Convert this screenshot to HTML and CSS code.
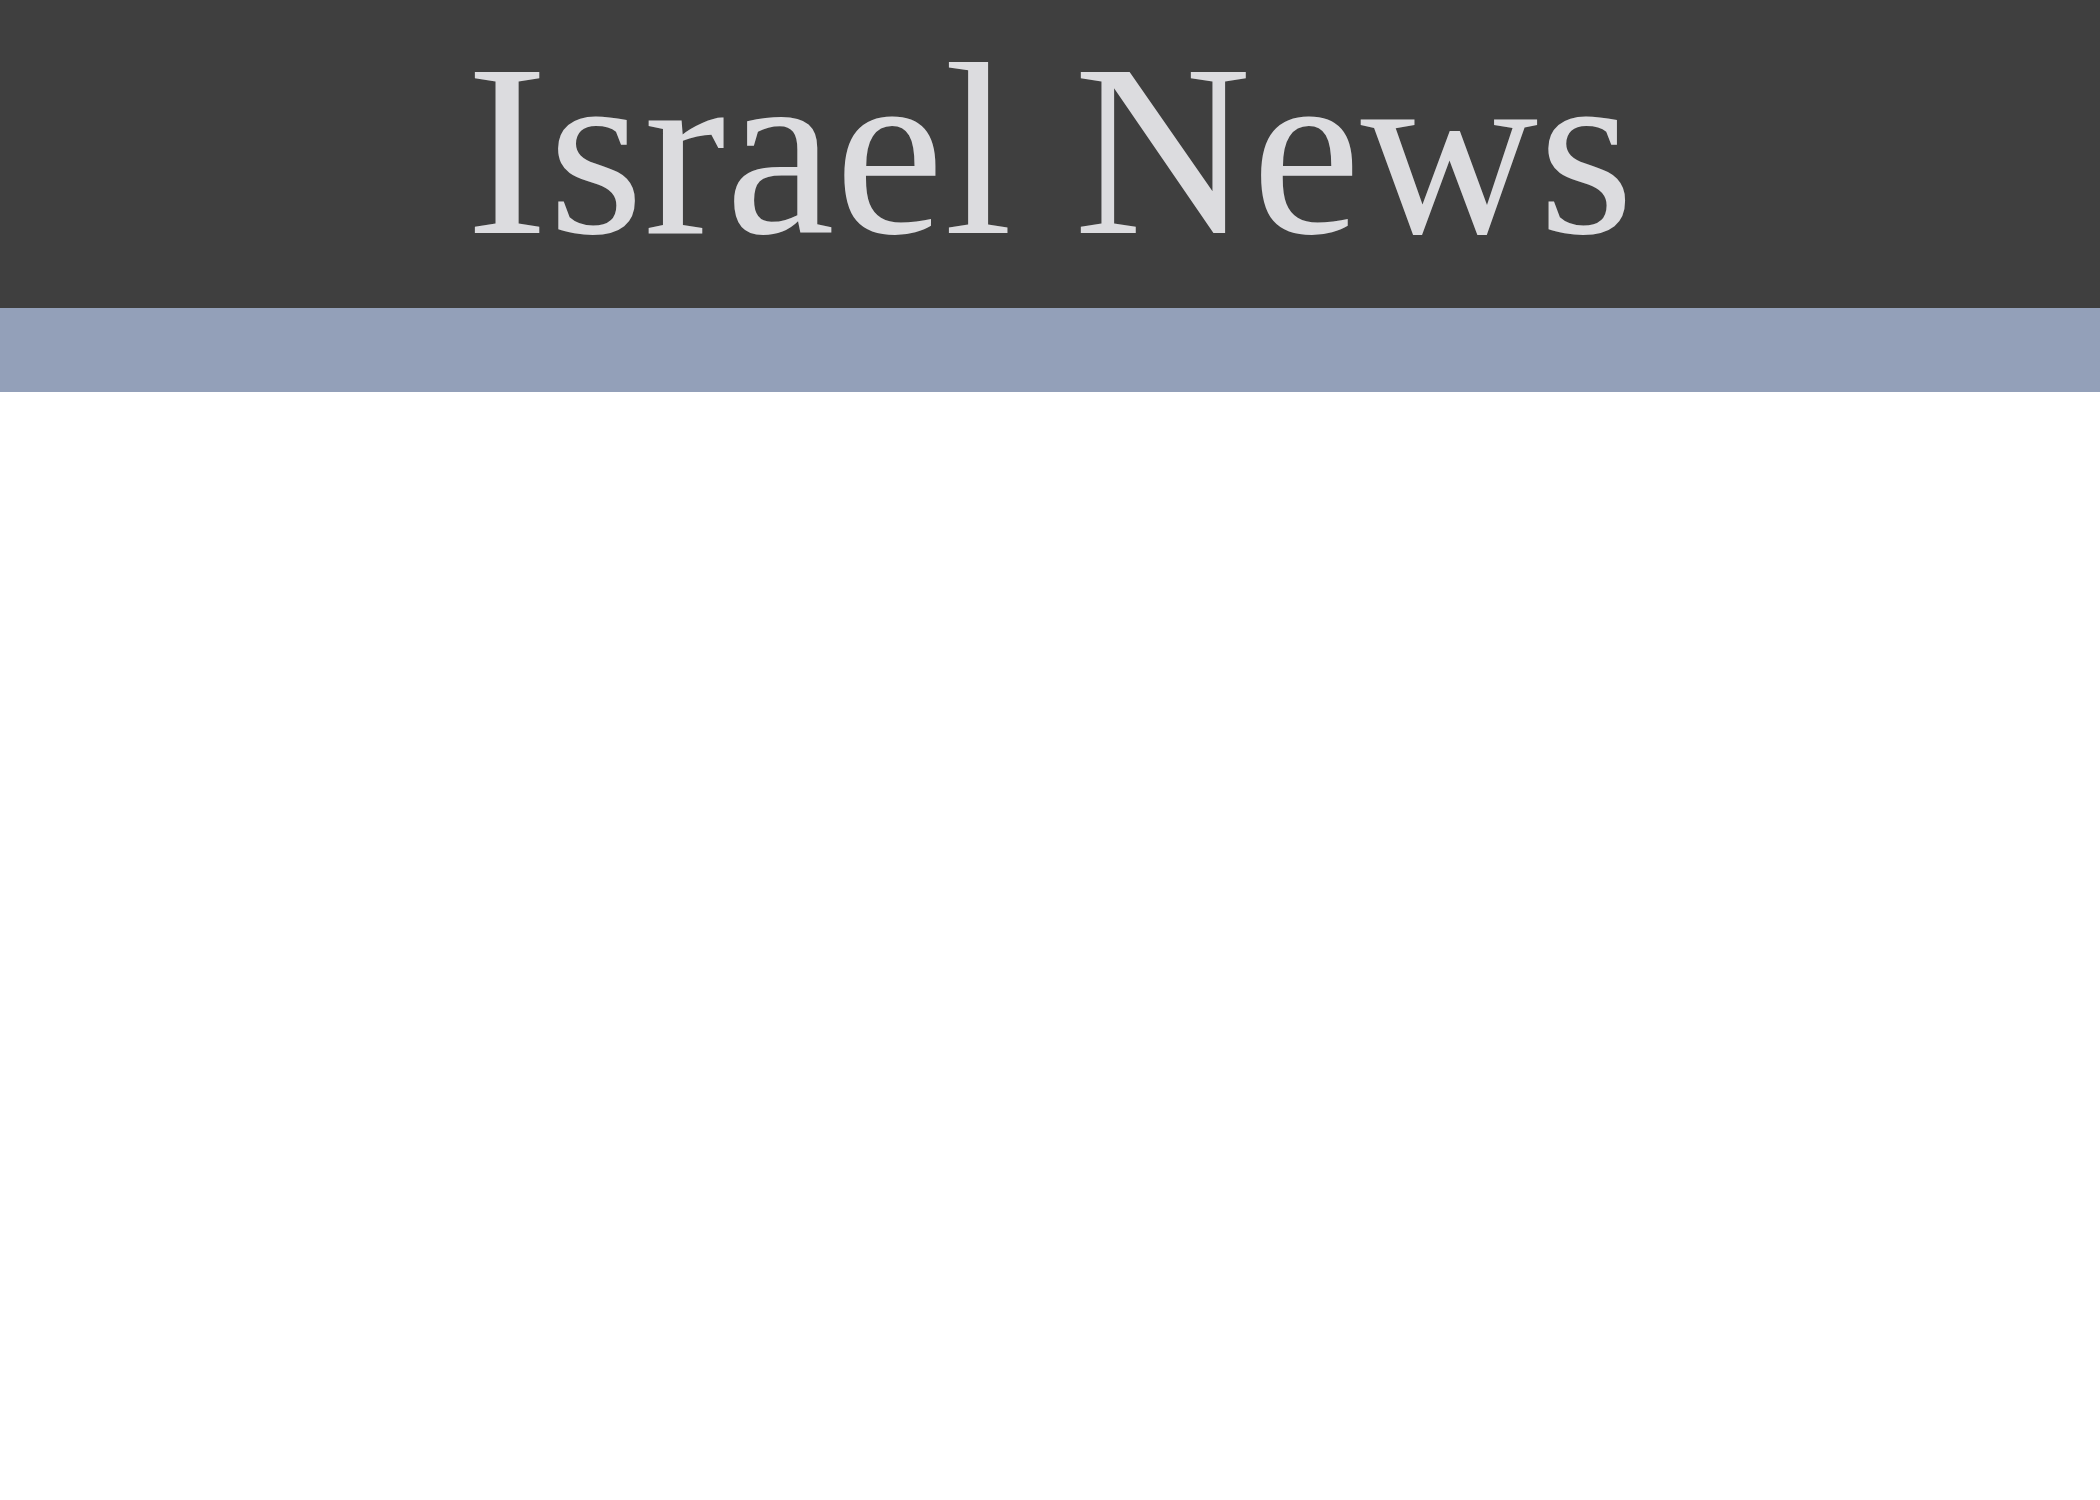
FILE: index.html
```html
<!DOCTYPE html>
<html lang="en">
<head>
<meta charset="utf-8">
<title>Israel News</title>
<link rel="stylesheet" href="styles.css">
</head>
<body>
<header class="masthead">
  <h1 class="masthead-title">Israel News</h1>
</header>
<nav class="nav-bar"></nav>
<main class="content"></main>
</body>
</html>
```
FILE: styles.css
```css
html, body {
  margin: 0;
  padding: 0;
  background: #ffffff;
}
.masthead {
  background: #3f3f3f;
  height: 308px;
  box-sizing: border-box;
  padding-top: 27px;
  text-align: center;
}
.masthead-title {
  margin: 0;
  font-family: "Liberation Serif", "Times New Roman", serif;
  font-weight: normal;
  font-size: 246px;
  line-height: 1;
  color: #dcdcdf;
}
.nav-bar {
  background: #93a0b9;
  height: 84px;
}
```
